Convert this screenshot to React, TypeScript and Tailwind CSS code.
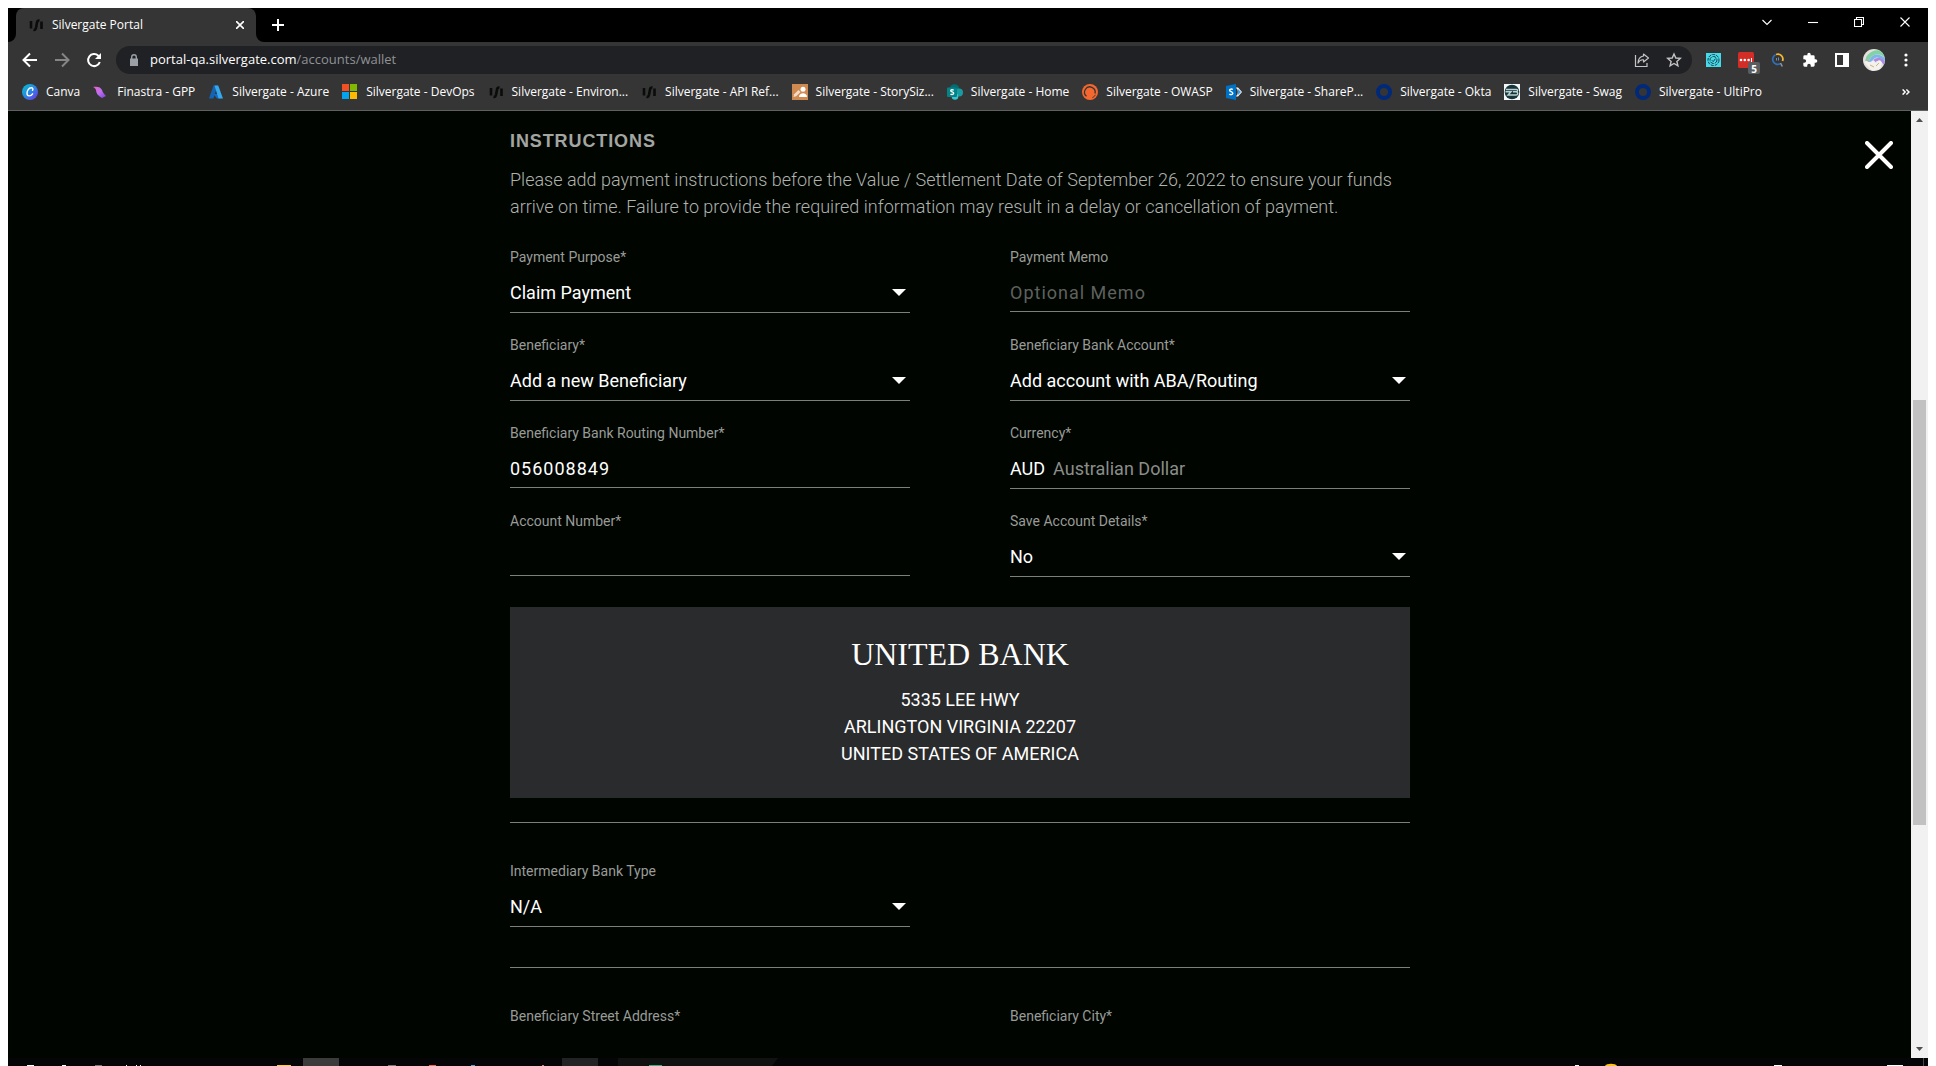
import type { ReactNode } from 'react';

const uiFont = "font-['Open_Sans','Noto_Sans',sans-serif]";

function SilvergateMark() {
  return (
    <svg viewBox="0 0 16 16" className="size-4 shrink-0" fill="none" stroke="#0a0c0a" strokeWidth="2.600">
      <path d="M3 4v7.500" />
      <path d="M5.500 13c1.800.3 2.200-.8 2.600-2.500l.8-4.500c.3-1.700 1-2.800 2.600-2.500" />
      <path d="M13.500 4.500V12" />
    </svg>
  );
}

function RingMark() {
  return (
    <svg viewBox="0 0 16 16" className="size-4 shrink-0">
      <circle cx="8" cy="8" r="6" fill="none" stroke="#00297a" strokeWidth="4" />
    </svg>
  );
}

function SharePointMark() {
  return (
    <svg viewBox="0 0 16 16" className="size-4 shrink-0">
      <circle cx="7.500" cy="5" r="4.800" fill="#036c70" />
      <circle cx="12" cy="8.500" r="4" fill="#1a9ba1" />
      <circle cx="8" cy="12.500" r="3.300" fill="#37c6d0" />
      <rect x="0" y="3.500" width="10" height="9.500" rx="1" fill="#038387" />
      <path d="M6.700 6.200c-.8-.6-3-.8-3 .6 0 1.400 3 .9 3 2.500 0 1.500-2.300 1.400-3.200.7" fill="none" stroke="#fff" strokeWidth="1.300" />
    </svg>
  );
}

const bookmarks: { label: string; icon: ReactNode }[] = [
  {
    label: 'Canva',
    icon: (
      <svg viewBox="0 0 16 16" className="size-4 shrink-0">
        <defs>
          <linearGradient id="canva" x1="0" y1="0" x2="1" y2="1">
            <stop offset="0" stopColor="#00c4cc" />
            <stop offset=".55" stopColor="#2f7fe6" />
            <stop offset="1" stopColor="#7d2ae8" />
          </linearGradient>
        </defs>
        <circle cx="8" cy="8" r="8" fill="url(#canva)" />
        <path d="M10.500 6.300c.9-1.200.2-2.700-1.400-2.500C6.800 4 5 6.700 5 9.300c0 3.500 4 3.300 5.600.5" fill="none" stroke="#fff" strokeWidth="1.400" strokeLinecap="round" />
      </svg>
    ),
  },
  {
    label: 'Finastra - GPP',
    icon: (
      <svg viewBox="0 0 16 16" className="size-4 shrink-0">
        <defs>
          <linearGradient id="finastra" x1="0" y1="0" x2="1" y2="1">
            <stop offset="0" stopColor="#f05fc8" />
            <stop offset=".5" stopColor="#c070f0" />
            <stop offset="1" stopColor="#7a3fe0" />
          </linearGradient>
        </defs>
        <path d="M0 3c4-1 8 0 9 3 .5 2 2 4 4 6l-4 2C5 12 3 9 3 6 2.500 4.500 1.500 3.500 0 3z" fill="url(#finastra)" />
      </svg>
    ),
  },
  {
    label: 'Silvergate - Azure',
    icon: (
      <svg viewBox="0 0 16 16" className="size-4 shrink-0">
        <path d="M5.500 1.500h4L5.500 14.500H1z" fill="#1464b4" />
        <path d="M5.500 10h6l1 4.500H9z" fill="#0f6cc4" />
        <path d="M6.500 1.500h3.700L15 14.500h-4.500z" fill="#35a8ee" />
      </svg>
    ),
  },
  {
    label: 'Silvergate - DevOps',
    icon: (
      <svg viewBox="0 0 16 16" className="size-4 shrink-0">
        <path d="M0 0h7v7H0z" fill="#f25022" />
        <path d="M8 0h7v7H8z" fill="#7fba00" />
        <path d="M0 8h7v7H0z" fill="#00a4ef" />
        <path d="M8 8h7v7H8z" fill="#ffb900" />
      </svg>
    ),
  },
  { label: 'Silvergate - Environ...', icon: <SilvergateMark /> },
  { label: 'Silvergate - API Ref...', icon: <SilvergateMark /> },
  {
    label: 'Silvergate - StorySiz...',
    icon: (
      <svg viewBox="0 0 16 16" className="size-4 shrink-0">
        <path d="M0 0h16v16H0z" fill="#cf8a52" />
        <circle cx="11" cy="5.200" r="2.500" fill="#fff" />
        <path d="M7 13c0-5 8-5 8 0z" fill="#fff" />
        <path d="M1.500 13l.7-2.700L6.500 6l2 2L4.200 12.300z" fill="#f2dcc8" />
      </svg>
    ),
  },
  { label: 'Silvergate - Home', icon: <SharePointMark /> },
  {
    label: 'Silvergate - OWASP',
    icon: (
      <svg viewBox="0 0 16 16" className="size-4 shrink-0" fill="none">
        <circle cx="8" cy="8" r="8" fill="#f4682f" />
        <path d="M4.500 12.300A5.300 5.300 0 1 1 13 9.500" stroke="#353535" strokeWidth="1.300" />
        <path d="M10.500 13.500c1.500-.5 2.300-1.500 2.700-2.700" stroke="#353535" strokeWidth="1" />
      </svg>
    ),
  },
  {
    label: 'Silvergate - ShareP...',
    icon: (
      <svg viewBox="0 0 16 16" className="size-4 shrink-0">
        <path d="M0 2l10-2v16L0 14z" fill="#0072c6" />
        <path d="M6.800 5.500c-1-.7-3.200-.7-3.200.8 0 1.700 3.200 1 3.200 3 0 1.500-2.200 1.600-3.400.8" fill="none" stroke="#fff" strokeWidth="1.400" />
        <path d="M10 3.500h2L16 8l-4 4.500h-2L12.500 8z" fill="#fff" />
        <path d="M11.500 4.500L15 8l-3.500 3.500z" fill="#4a9be0" />
      </svg>
    ),
  },
  { label: 'Silvergate - Okta', icon: <RingMark /> },
  {
    label: 'Silvergate - Swag',
    icon: (
      <svg viewBox="0 0 16 16" className="size-4 shrink-0">
        <path d="M0 0h16v16H0z" fill="#f4f7f7" />
        <circle cx="8" cy="8" r="7.300" fill="#17343a" />
        <path d="M2 5.500h10.500c1.500 0 1.500 2 0 2.300H9m3 0c2.500.2 2 3.200 0 3.200H4l3-3.200H1.500" fill="none" stroke="#b9d0d2" strokeWidth="1.400" />
      </svg>
    ),
  },
  { label: 'Silvergate - UltiPro', icon: <RingMark /> },
];

function TabStrip() {
  return (
    <div className="flex h-[34px] shrink-0 items-start bg-black">
      <div className="flex h-full w-2 shrink-0 items-end">
        <svg viewBox="0 0 8 8" className="size-2"><path d="M8 0v8H0a8 8 0 0 0 8-8z" fill="#353535" /></svg>
      </div>
      <div className="flex h-full w-60 items-center gap-2 rounded-t-lg bg-[#353535] pl-3 pr-2 text-white">
        <SilvergateMark />
        <span className="grow text-xs">Silvergate Portal</span>
        <button type="button" aria-label="Close tab" className="grid size-4 place-items-center">
          <svg viewBox="0 0 8 8" className="size-2" stroke="#fff" strokeWidth="1.600"><path d="M0 0l8 8M8 0L0 8" /></svg>
        </button>
      </div>
      <div className="flex h-full w-2 shrink-0 items-end">
        <svg viewBox="0 0 8 8" className="size-2"><path d="M0 0v8h8a8 8 0 0 1-8-8z" fill="#353535" /></svg>
      </div>
      <button type="button" aria-label="New tab" className="grid h-full w-7 place-items-center">
        <svg viewBox="0 0 12 12" className="size-3" stroke="#fff" strokeWidth="2"><path d="M6 0v12M0 6h12" /></svg>
      </button>
      <div className="ml-auto flex h-7 text-white">
        {[
          ['Search tabs', 'M.5 3l4.500 4.500L9.500 3'],
          ['Minimize', 'M0 5.500h10'],
          ['Restore', 'M.5 2.500h7v7h-7zM2.500 2.500v-2h7v7h-2'],
          ['Close window', 'M.5.500l9 9M9.500.500l-9 9'],
        ].map(([name, d]) => (
          <button key={name} type="button" aria-label={name} className="grid w-[46px] place-items-center">
            <svg viewBox="0 0 10 10" className="size-[10px]" fill="none" stroke="currentColor" strokeWidth="1.100"><path d={d} /></svg>
          </button>
        ))}
      </div>
    </div>
  );
}

function ToolButton({ name, children }: { name: string; children: ReactNode }) {
  return (
    <button type="button" aria-label={name} className="relative grid size-8 shrink-0 place-items-center">
      {children}
    </button>
  );
}

function Toolbar() {
  return (
    <div className="flex h-9 shrink-0 items-center bg-[#353535] pl-[6px] pr-[6px]">
      <ToolButton name="Back">
        <svg viewBox="0 0 16 16" className="size-4" fill="none" stroke="#fff" strokeWidth="2"><path d="M15 8H2M8 1.500L1.500 8 8 14.500" /></svg>
      </ToolButton>
      <ToolButton name="Forward">
        <svg viewBox="0 0 16 16" className="size-4" fill="none" stroke="#868686" strokeWidth="2"><path d="M1 8h13M8 1.500L14.500 8 8 14.500" /></svg>
      </ToolButton>
      <ToolButton name="Reload">
        <svg viewBox="0 0 16 16" className="size-4" fill="none" stroke="#fff" strokeWidth="2">
          <path d="M13.800 10a6 6 0 1 1-1.500-6.200L14 5.500" />
          <path d="M15 1v6H9z" fill="#fff" stroke="none" />
        </svg>
      </ToolButton>
      <div className="ml-[6px] mr-[6px] flex h-7 min-w-0 grow items-center rounded-full bg-[#202124] pl-3 pr-[2px]">
        <svg viewBox="0 0 12 12" className="mr-[10px] size-3 shrink-0">
          <path d="M2 4.500h8V12H2z" fill="#9aa0a6" />
          <path d="M3.700 5V3a2.300 2.300 0 0 1 4.600 0v2" fill="none" stroke="#9aa0a6" strokeWidth="1.400" />
        </svg>
        <span className="grow text-[13px] text-[#8f9296]">
          <span className="text-white">portal-qa.silvergate.com</span>/accounts/wallet
        </span>
        <ToolButton name="Share">
          <svg viewBox="0 0 16 16" className="size-4" fill="none" stroke="#c4c4c4" strokeWidth="1.200">
            <path d="M1.500 3v11.500H13V11" />
            <path d="M9.500 2l5 4-5 4V7.800C7 7.500 5.200 8.500 4 11c.2-3.800 2-6.500 5.500-7z" strokeLinejoin="round" />
          </svg>
        </ToolButton>
        <ToolButton name="Bookmark this tab">
          <svg viewBox="0 0 16 16" className="size-4" fill="none" stroke="#c4c4c4" strokeWidth="1.400">
            <path d="M8 2l1.800 4 4.500.4-3.400 3 1 4.400L8 11.500l-3.900 2.300 1-4.400-3.400-3 4.500-.4z" />
          </svg>
        </ToolButton>
      </div>
      <ToolButton name="Fingerprint extension">
        <svg viewBox="0 0 16 16" className="size-4" fill="none" stroke="#173c4c">
          <path d="M0 1h15v14H0z" fill="#45dbe8" stroke="none" />
          <circle cx="7.500" cy="8" r="5.500" strokeDasharray="3 1" />
          <circle cx="7.500" cy="8" r="3.500" strokeDasharray="4 1" />
          <path d="M5.800 8.200l1.400 1.400 2.300-3" />
        </svg>
      </ToolButton>
      <ToolButton name="Password manager, 5 items">
        <svg viewBox="0 0 16 16" className="size-4">
          <rect width="16" height="16" rx="1.500" fill="#d32d27" />
          <circle cx="3" cy="8" r="1.300" fill="#fff" />
          <circle cx="6.800" cy="8" r="1.300" fill="#fff" />
          <circle cx="10.600" cy="8" r="1.300" fill="#fff" />
          <path d="M13.500 6v4" stroke="#fff" />
        </svg>
        <span className="absolute bottom-[2px] right-[2px] grid h-3 w-3 place-items-center rounded-xs bg-[#5a5d5f] text-[10px] font-bold text-white">5</span>
      </ToolButton>
      <ToolButton name="Search extension">
        <svg viewBox="0 0 16 16" className="size-4" fill="none">
          <path d="M6 2.500A5 5 0 0 1 12.500 9" stroke="#f2b632" strokeWidth="1.800" />
          <path d="M5.500 2.800a5 5 0 0 0 4.500 9" stroke="#2f6fb5" strokeWidth="1.800" />
          <path d="M10.500 11l1.800 3.500" stroke="#8b98a5" strokeWidth="1.600" />
          <path d="M8.500 5.500v3M6.500 6v2.500" stroke="#6f8dae" />
        </svg>
      </ToolButton>
      <ToolButton name="Extensions">
        <svg viewBox="0 0 24 24" className="size-4" fill="#fff">
          <path d="M20.500 11H19V7a2 2 0 0 0-2-2h-4V3.500a2.500 2.500 0 0 0-5 0V5H4a2 2 0 0 0-2 2v3.800h1.500a2.700 2.700 0 0 1 0 5.400H2V20a2 2 0 0 0 2 2h3.800v-1.500a2.700 2.700 0 0 1 5.400 0V22H17a2 2 0 0 0 2-2v-4h1.500a2.500 2.500 0 0 0 0-5z" />
        </svg>
      </ToolButton>
      <ToolButton name="Side panel">
        <svg viewBox="0 0 14 14" className="size-[14px]"><path d="M0 0h14v14H0zM2 2v10h6V2z" fill="#fff" fillRule="evenodd" /></svg>
      </ToolButton>
      <ToolButton name="Profile">
        <svg viewBox="0 0 22 22" className="size-[22px]">
          <defs><clipPath id="avatar"><circle cx="11" cy="11" r="11" /></clipPath></defs>
          <g clipPath="url(#avatar)" fill="none">
            <path d="M0 0h22v22H0z" fill="#e4dfdc" />
            <path d="M4 13C5 5 13 0 22 6" stroke="#7fd3a4" strokeWidth="4" />
            <path d="M7 14C9 7 14 4 22 11" stroke="#7fb6ea" strokeWidth="3" />
            <path d="M10 14c2-4 7-6 12 1" stroke="#a98be0" strokeWidth="3" />
            <path d="M1 13c3-3 5 2 8-1s3 4 5 1 4-2 5 1l-2 6-8 2z" fill="#f3f1ef" />
            <path d="M7 16l4 2M13 17l3-3" stroke="#d6b06b" />
            <path d="M3 10l3 3" stroke="#e59aa8" />
          </g>
        </svg>
      </ToolButton>
      <ToolButton name="Browser menu">
        <svg viewBox="0 0 4 14" className="h-[14px] w-1" fill="#fff"><circle cx="2" cy="2" r="1.600" /><circle cx="2" cy="7" r="1.600" /><circle cx="2" cy="12" r="1.600" /></svg>
      </ToolButton>
    </div>
  );
}

function BookmarksBar() {
  return (
    <nav aria-label="Bookmarks" className="flex h-[33px] shrink-0 items-center gap-[13px] border-b border-[#5f6160] bg-[#353535] pb-1 pl-[14px] pr-[18px]">
      {bookmarks.map(({ label, icon }) => (
        <a key={label} href="#bookmark" className="flex items-center gap-2 whitespace-nowrap text-xs text-white">
          {icon}
          {label}
        </a>
      ))}
      <button type="button" aria-label="More bookmarks" className="ml-auto">
        <svg viewBox="0 0 8 6" className="h-[6px] w-2" fill="none" stroke="#fff" strokeWidth="1.400"><path d="M.6.400L3.200 3 .6 5.600M4.400.400L7 3 4.400 5.600" /></svg>
      </button>
    </nav>
  );
}

function Field({ id, label, children }: { id: string; label: string; children: ReactNode }) {
  return (
    <div>
      <label htmlFor={id} className="mb-[6px] block text-sm leading-5 text-[#999b98]">{label}</label>
      {children}
    </div>
  );
}

function SelectField({ id, label, value }: { id: string; label: string; value: string }) {
  return (
    <Field id={id} label={label}>
      <div className="relative">
        <select id={id} defaultValue={value} className="block h-10 w-full appearance-none border-b border-[#7d7f7c] bg-transparent text-lg text-white">
          <option>{value}</option>
        </select>
        <svg viewBox="0 0 14 7" className="pointer-events-none absolute right-1 top-4 h-[7px] w-[14px]"><path d="M0 0h14L7 7z" fill="#fff" /></svg>
      </div>
    </Field>
  );
}

function TextField({ id, label, value, placeholder }: { id: string; label: string; value?: string; placeholder?: string }) {
  return (
    <Field id={id} label={label}>
      <input
        id={id}
        type="text"
        defaultValue={value}
        placeholder={placeholder}
        className="block h-[39px] w-full border-b border-[#7d7f7c] bg-transparent text-lg tracking-[1px] text-white placeholder:text-[#5f615e]"
      />
    </Field>
  );
}

function PaymentInstructions() {
  return (
    <main className="mx-auto w-full max-w-[900px] pt-4 font-['Roboto','Liberation_Sans',sans-serif] font-normal">
      <h2 className="font-['Liberation_Sans',Arial,sans-serif] text-lg font-bold leading-7 tracking-wider text-[#a3a5a2]">INSTRUCTIONS</h2>
      <p className="mt-[11px] text-lg font-light leading-[27px] text-[#b0b2af]">
        Please add payment instructions before the Value / Settlement Date of September 26, 2022 to ensure your funds
        arrive on time. Failure to provide the required information may result in a delay or cancellation of payment.
      </p>
      <form>
        <div className="mt-[27px] grid grid-cols-2 gap-x-[100px] gap-y-[22px]">
          <SelectField id="purpose" label="Payment Purpose*" value="Claim Payment" />
          <TextField id="memo" label="Payment Memo" placeholder="Optional Memo" />
          <SelectField id="beneficiary" label="Beneficiary*" value="Add a new Beneficiary" />
          <SelectField id="bank-account" label="Beneficiary Bank Account*" value="Add account with ABA/Routing" />
          <TextField id="routing" label="Beneficiary Bank Routing Number*" value="056008849" />
          <Field id="currency" label="Currency*">
            <output id="currency" className="flex h-10 items-center gap-2 border-b border-[#7d7f7c] text-lg text-white">
              AUD <span className="text-[#8b8d8a]">Australian Dollar</span>
            </output>
          </Field>
          <TextField id="account-number" label="Account Number*" />
          <SelectField id="save-details" label="Save Account Details*" value="No" />
        </div>
        <section className="mt-[30px] bg-[#2a2b2c] pb-[31px] pt-[27px] text-center text-white">
          <h3 className="mb-3 font-['Liberation_Serif','Times_New_Roman',serif] text-[32px] leading-10">UNITED BANK</h3>
          <address className="text-lg not-italic leading-[27px]">
            5335 LEE HWY
            <br />
            ARLINGTON VIRGINIA 22207
            <br />
            UNITED STATES OF AMERICA
          </address>
        </section>
        <hr className="mt-6 border-[#7d7f7c]" />
        <div className="mt-[38px] grid grid-cols-2 gap-x-[100px]">
          <SelectField id="intermediary" label="Intermediary Bank Type" value="N/A" />
        </div>
        <hr className="mt-10 border-[#7d7f7c]" />
        <div className="mt-[38px] grid grid-cols-2 gap-x-[100px]">
          <TextField id="street" label="Beneficiary Street Address*" />
          <TextField id="city" label="Beneficiary City*" />
        </div>
      </form>
    </main>
  );
}

function Scrollbar() {
  return (
    <div className="flex w-[17px] shrink-0 flex-col items-center bg-[#f1f1f1] py-[7px]">
      <svg viewBox="0 0 7 4" className="h-1 w-[7px] shrink-0"><path d="M0 4l3.500-4L7 4z" fill="#505050" /></svg>
      <div className="grow-[278]" />
      <div className="w-[13px] grow-[425] bg-[#c1c1c1]" />
      <div className="grow-[222]" />
      <svg viewBox="0 0 7 4" className="h-1 w-[7px] shrink-0"><path d="M0 0l3.500 4L7 0z" fill="#505050" /></svg>
    </div>
  );
}

function Taskbar() {
  return (
    <svg className="h-2 w-full shrink-0 bg-[#050406]" viewBox="0 0 1920 8" preserveAspectRatio="xMinYMin slice" aria-hidden="true">
      <path d="M295 0h36v8h-36z" fill="#3b3b3b" />
      <path d="M554 0h36v8h-36z" fill="#222324" />
      <path d="M610 0h160l-6 8H610z" fill="#111112" />
      <path d="M19 7h7v1h-7zM54 7h4v1h-4zM118 7h1v1h-1zM128 7h1v1h-1zM132 7h1v1h-1zM1567 7h4v1h-4zM1766 7h8v1h-8zM1879 7h16v1h-16z" fill="#fff" />
      <path d="M87 7h7v1h-7zM380 7h8v1h-8z" fill="#777" />
      <path d="M269 7h14v1h-14z" fill="#ffd21f" />
      <path d="M421 7h7v1h-7z" fill="#ef6a45" />
      <path d="M463 7h4v1h-4z" fill="#45a9d8" />
      <path d="M534 7h2v1h-2z" fill="#d98070" />
      <path d="M641 7h13v1h-13z" fill="#31b080" />
      <path d="M1597 8c1-3 11-3 12 0z" fill="#ffc20e" />
      <path d="M1915 0h1v8h-1z" fill="#4a4a4a" />
    </svg>
  );
}

export default function App() {
  return (
    <div className="h-screen bg-white px-2 pt-2">
      <div className={`flex h-full flex-col overflow-hidden ${uiFont}`}>
        <TabStrip />
        <Toolbar />
        <BookmarksBar />
        <div className="relative flex min-h-0 grow overflow-hidden bg-[#000500]">
          <div className="min-w-0 grow overflow-hidden pl-px">
            <PaymentInstructions />
          </div>
          <button type="button" aria-label="Close" className="absolute right-[35px] top-[30px] size-7">
            <svg viewBox="0 0 28 28" className="size-7" stroke="#fff" strokeWidth="4" strokeLinecap="round"><path d="M2 2l24 24M26 2L2 26" /></svg>
          </button>
          <Scrollbar />
        </div>
        <Taskbar />
      </div>
    </div>
  );
}
